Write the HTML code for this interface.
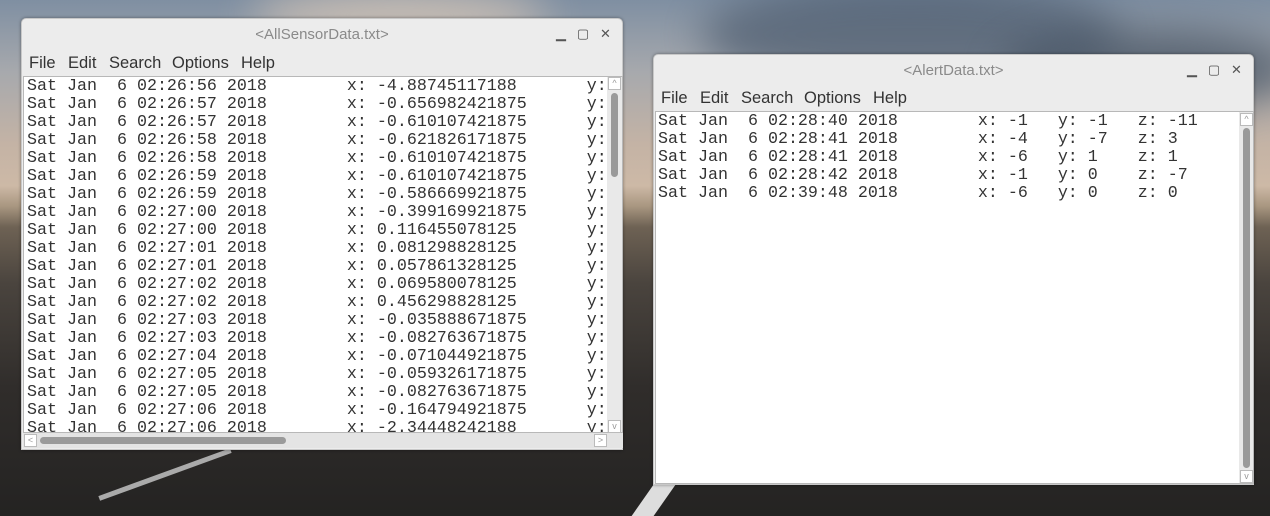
<!DOCTYPE html>
<html><head><meta charset="utf-8"><style>
*{margin:0;padding:0;box-sizing:border-box}
html,body{width:1270px;height:516px;overflow:hidden}
body{position:relative;font-family:"Liberation Sans",sans-serif;
background:linear-gradient(180deg,#7f8fa2 0%,#a7a9ad 14%,#c4b3a5 28%,#cdb9a6 36%,#a89680 40%,#6e6254 44%,#4a443e 55%,#302d2b 75%,#242322 100%);}
.cloud{position:absolute;border-radius:50%;filter:blur(20px)}
.win{position:absolute;background:#ececec;border:1px solid #c8c8c8;border-radius:5px 5px 0 0;box-shadow:0 0 3px rgba(0,0,0,.4)}
.title{position:absolute;left:0;right:0;text-align:center;font-size:15px;color:#8a8a8a}
.btns{position:absolute;font-size:13px;color:#555}
.menu{position:absolute;top:0;left:0;font-size:16.5px;color:#333}
.menu span{position:absolute;white-space:nowrap}
.text{position:absolute;background:#fff;border:1px solid #b8b8b8;overflow:hidden;font-family:"Liberation Mono",monospace;font-size:16.67px;line-height:18px;color:#333;white-space:pre}
.vs{position:absolute;background:#e9e9e9}
.thumb{position:absolute;background:#9a9a9a;border-radius:4px}
.arr{position:absolute;width:13px;height:13px;border:1px solid #bbb;background:#fff;color:#999;font-size:9px;text-align:center;line-height:11px}
</style></head><body>
<div class="cloud" style="left:700px;top:-20px;width:420px;height:110px;background:#4c5b6e;opacity:.7"></div>
<div class="cloud" style="left:1000px;top:30px;width:300px;height:80px;background:#3f4d5e;opacity:.7"></div>
<div class="cloud" style="left:250px;top:-10px;width:300px;height:50px;background:#e8d2bc;opacity:.7"></div>
<div style="position:absolute;left:640px;top:484px;width:22px;height:40px;background:#ddd;transform:skewX(-35deg)"></div>
<div style="position:absolute;left:95px;top:472px;width:140px;height:5px;background:#aaa;transform:rotate(-20deg)"></div>

<div class="win" style="left:21px;top:18px;width:602px;height:432px">
 <div class="title" style="top:7px">&lt;AllSensorData.txt&gt;</div>
 <div class="btns" style="left:534px;top:7px">▁&nbsp;&nbsp;&nbsp;▢&nbsp;&nbsp;&nbsp;✕</div>
 <div class="menu" style="top:35px"><span style="left:7px">File</span><span style="left:46px">Edit</span><span style="left:87px">Search</span><span style="left:150px">Options</span><span style="left:219px">Help</span></div>
 <div class="text" style="left:1px;top:57px;width:600px;height:357px;padding-left:3px;padding-top:1px">Sat Jan  6 02:26:56 2018        x: -4.88745117188       y:
Sat Jan  6 02:26:57 2018        x: -0.656982421875      y:
Sat Jan  6 02:26:57 2018        x: -0.610107421875      y:
Sat Jan  6 02:26:58 2018        x: -0.621826171875      y:
Sat Jan  6 02:26:58 2018        x: -0.610107421875      y:
Sat Jan  6 02:26:59 2018        x: -0.610107421875      y:
Sat Jan  6 02:26:59 2018        x: -0.586669921875      y:
Sat Jan  6 02:27:00 2018        x: -0.399169921875      y:
Sat Jan  6 02:27:00 2018        x: 0.116455078125       y:
Sat Jan  6 02:27:01 2018        x: 0.081298828125       y:
Sat Jan  6 02:27:01 2018        x: 0.057861328125       y:
Sat Jan  6 02:27:02 2018        x: 0.069580078125       y:
Sat Jan  6 02:27:02 2018        x: 0.456298828125       y:
Sat Jan  6 02:27:03 2018        x: -0.035888671875      y:
Sat Jan  6 02:27:03 2018        x: -0.082763671875      y:
Sat Jan  6 02:27:04 2018        x: -0.071044921875      y:
Sat Jan  6 02:27:05 2018        x: -0.059326171875      y:
Sat Jan  6 02:27:05 2018        x: -0.082763671875      y:
Sat Jan  6 02:27:06 2018        x: -0.164794921875      y:
Sat Jan  6 02:27:06 2018        x: -2.34448242188       y:
   <div class="vs" style="right:0;top:0;width:15px;height:357px"></div>
 </div>
 <div class="arr" style="left:586px;top:58px">^</div>
 <div class="thumb" style="left:589px;top:74px;width:7px;height:84px"></div>
 <div class="arr" style="left:586px;top:401px">v</div>
 <div class="vs" style="left:1px;top:414px;width:600px;height:15px;background:#e4e4e4"></div>
 <div class="arr" style="left:2px;top:415px">&lt;</div>
 <div class="thumb" style="left:18px;top:418px;width:246px;height:7px"></div>
 <div class="arr" style="left:572px;top:415px">&gt;</div>
</div>

<div class="win" style="left:653px;top:54px;width:601px;height:431px">
 <div class="title" style="top:7px">&lt;AlertData.txt&gt;</div>
 <div class="btns" style="left:533px;top:7px">▁&nbsp;&nbsp;&nbsp;▢&nbsp;&nbsp;&nbsp;✕</div>
 <div class="menu" style="top:34px"><span style="left:7px">File</span><span style="left:46px">Edit</span><span style="left:87px">Search</span><span style="left:150px">Options</span><span style="left:219px">Help</span></div>
 <div class="text" style="left:1px;top:56px;width:599px;height:373px;padding-left:2px;padding-top:1px">Sat Jan  6 02:28:40 2018        x: -1   y: -1   z: -11
Sat Jan  6 02:28:41 2018        x: -4   y: -7   z: 3
Sat Jan  6 02:28:41 2018        x: -6   y: 1    z: 1
Sat Jan  6 02:28:42 2018        x: -1   y: 0    z: -7
Sat Jan  6 02:39:48 2018        x: -6   y: 0    z: 0
   <div class="vs" style="right:0;top:0;width:14px;height:373px"></div>
 </div>
 <div class="arr" style="left:586px;top:58px">^</div>
 <div class="thumb" style="left:589px;top:73px;width:7px;height:340px"></div>
 <div class="arr" style="left:586px;top:415px">v</div>
</div>
</body></html>
